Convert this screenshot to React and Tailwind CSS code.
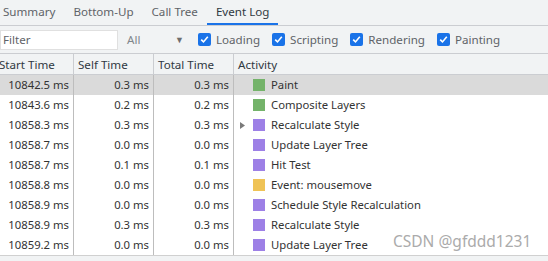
import { useState } from "react";

const rows = [
  { start: "10842.5 ms", self: "0.3 ms", total: "0.3 ms", color: "bg-[#74b36a]", name: "Paint", selected: true },
  { start: "10843.6 ms", self: "0.2 ms", total: "0.2 ms", color: "bg-[#74b36a]", name: "Composite Layers" },
  { start: "10858.3 ms", self: "0.3 ms", total: "0.3 ms", color: "bg-[#9d80e6]", name: "Recalculate Style", arrow: true },
  { start: "10858.7 ms", self: "0.0 ms", total: "0.0 ms", color: "bg-[#9d80e6]", name: "Update Layer Tree" },
  { start: "10858.7 ms", self: "0.1 ms", total: "0.1 ms", color: "bg-[#9d80e6]", name: "Hit Test" },
  { start: "10858.8 ms", self: "0.0 ms", total: "0.0 ms", color: "bg-[#efc356]", name: "Event: mousemove" },
  { start: "10858.9 ms", self: "0.0 ms", total: "0.0 ms", color: "bg-[#9d80e6]", name: "Schedule Style Recalculation" },
  { start: "10858.9 ms", self: "0.3 ms", total: "0.3 ms", color: "bg-[#9d80e6]", name: "Recalculate Style" },
  { start: "10859.2 ms", self: "0.0 ms", total: "0.0 ms", color: "bg-[#9d80e6]", name: "Update Layer Tree" },
];

const tabs = ["Summary", "Bottom-Up", "Call Tree", "Event Log"];
const filters = ["Loading", "Scripting", "Rendering", "Painting"];

function Check({ label }) {
  return (
    <label className="flex items-center gap-[5px] mr-[12px]">
      <span className="w-[13px] h-[13px] rounded-[2px] bg-[#1a73e8] flex items-center justify-center">
        <svg width="9" height="9" viewBox="0 0 9 9">
          <path d="M1.2 4.6 L3.5 6.9 L7.8 1.8" fill="none" stroke="white" strokeWidth="1.6" />
        </svg>
      </span>
      <span>{label}</span>
    </label>
  );
}

export default function App() {
  const [active] = useState("Event Log");

  return (
    <div
      className="relative w-[548px] h-[261px] overflow-hidden bg-white text-[11.3px] text-[#333333]"
      style={{ fontFamily: '"Noto Sans", "Open Sans", sans-serif' }}
    >
      {/* tabs */}
      <div className="h-[26px] bg-[#f1f3f4] border-b border-[#cbcdd1] flex ml-[-6px] text-[11.6px]">
        {tabs.map((t) => (
          <div
            key={t}
            className={
              "px-[9px] h-full flex items-center pt-[1px] border-b-2 " +
              (t === active ? "border-[#1a73e8] text-[#303942]" : "border-transparent text-[#5f6368]")
            }
          >
            {t}
          </div>
        ))}
      </div>

      {/* filter bar */}
      <div className="h-[27px] bg-[#f1f3f4] flex items-center text-[#5f6368] text-[11.6px]">
        <div className="w-[118px] h-[20px] bg-white border border-[#e0e0e0] flex items-center pl-[2px] text-[#5f6368]">
          Filter
        </div>
        <div className="ml-[9px] w-[57px] flex items-center justify-between text-[#80868b]">
          <span>All</span>
          <span className="text-[9px] text-[#6e6e6e]">▼</span>
        </div>
        <div className="ml-[14px] flex items-center text-[#5f6368]">
          {filters.map((f) => (
            <Check key={f} label={f} />
          ))}
        </div>
      </div>

      {/* header */}
      <div className="h-[22px] bg-[#f1f3f4] border-t border-b border-[#cbcdd1] grid grid-cols-[74px_80px_80px_1fr] text-[#303942] text-[11.6px]">
        <div className="border-r border-[#cbcdd1] flex items-center pt-[2px] ml-[-1px]">Start Time</div>
        <div className="border-r border-[#cbcdd1] flex items-center pt-[2px] pl-[4px]">Self Time</div>
        <div className="border-r border-[#cbcdd1] flex items-center pt-[2px] pl-[4px]">Total Time</div>
        <div className="flex items-center pt-[2px] pl-[4px]">Activity</div>
      </div>

      {/* rows */}
      <div>
        {rows.map((r, i) => (
          <div
            key={i}
            className={
              "h-[20px] grid grid-cols-[74px_80px_80px_1fr] " + (r.selected ? "bg-[#dadada]" : "bg-white")
            }
          >
            <div className="border-r border-[#bdbdbd] flex items-center justify-end pr-[4px] pt-[1px]">{r.start}</div>
            <div className="border-r border-[#bdbdbd] flex items-center justify-end pr-[4px] pt-[1px]">{r.self}</div>
            <div className="border-r border-[#bdbdbd] flex items-center justify-end pr-[4px] pt-[1px]">{r.total}</div>
            <div className="flex items-center pl-[6px]">
              <span className="w-[13px] flex items-center">
                {r.arrow && (
                  <svg width="5" height="7" viewBox="0 0 5 7">
                    <path d="M0 0 L5 3.5 L0 7 Z" fill="#7a7a7a" />
                  </svg>
                )}
              </span>
              <span className={"w-[12px] h-[12px] mr-[6px] " + r.color} />
              <span className="pt-[1px]">{r.name}</span>
            </div>
          </div>
        ))}
      </div>

      <div className="h-[6px] bg-[#f1f3f4] border-t border-[#d0d0d0]" />

      {/* watermark */}
      <div
        className="absolute left-[393px] top-[230px] text-[15.5px] text-[#ababab]"
        style={{ fontFamily: '"Noto Sans", sans-serif' }}
      >
        CSDN @gfddd1231
      </div>
    </div>
  );
}
